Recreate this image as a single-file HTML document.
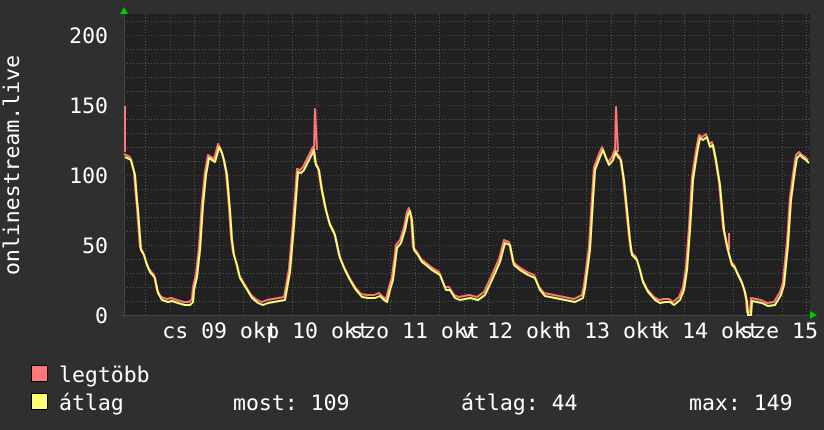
<!DOCTYPE html>
<html><head><meta charset="utf-8"><style>
html,body{margin:0;padding:0;background:#2f2f2f;}
svg{display:block}
text{font-family:"DejaVu Sans Mono","Liberation Mono",monospace;fill:#fff;font-size:21.5px}
</style></head><body>
<svg width="824" height="430" viewBox="0 0 824 430" xmlns="http://www.w3.org/2000/svg">
<rect width="824" height="430" fill="#2f2f2f"/>
<rect x="124" y="14" width="686" height="301" fill="#212121"/>
<g stroke="#555" stroke-width="1" stroke-dasharray="1,2">
<path d="M124 301.5H810M124 287.5H810M124 273.5H810M124 259.5H810M124 231.5H810M124 217.5H810M124 203.5H810M124 189.5H810M124 161.5H810M124 147.5H810M124 133.5H810M124 119.5H810M124 91.5H810M124 77.5H810M124 63.5H810M124 49.5H810M124 21.5H810"/>
<path d="M145.5 14V315M194.5 14V315M219.5 14V315M243.5 14V315M292.5 14V315M317.5 14V315M341.5 14V315M390.5 14V315M415.5 14V315M439.5 14V315M488.5 14V315M513.5 14V315M537.5 14V315M586.5 14V315M611.5 14V315M635.5 14V315M684.5 14V315M709.5 14V315M733.5 14V315M782.5 14V315M806.5 14V315"/>
</g>
<g stroke="#6a3a3a" stroke-width="1" stroke-dasharray="1,2">
<path d="M124 35.5H810M124 105.5H810M124 175.5H810M124 245.5H810"/>
<path d="M170.5 14V315M268.5 14V315M366.5 14V315M464.5 14V315M562.5 14V315M660.5 14V315M758.5 14V315"/>
</g>
<path d="M124.5 14V318" stroke="#444" stroke-width="1"/>
<path d="M121 315.5H812" stroke="#444" stroke-width="1"/>
<path d="M120 14L124 7L128 14Z" fill="#0c0"/>
<path d="M810 311L817 315L810 319Z" fill="#0c0"/>
<g fill="none" stroke-width="2" stroke-linejoin="round">
<polyline transform="translate(-1,-3)" stroke="#ff7777" points="125,157 131,160 135,175 137,200 138,210 141,250 144,255 147,265 150,272 155,278 158,293 162,300 168,302 172,301 178,303 185,305 190,305 193,302 194,290 197,277 200,250 203,205 206,175 209,158 212,160 215,162 217,155 219,147 222,153 224,160 227,175 230,210 232,240 234,255 237,265 240,278 246,288 252,298 258,303 263,305 268,303 285,300 290,272 294,225 298,172 301,173 304,170 308,162 314,150 316,165 319,170 322,190 326,210 330,225 335,235 340,258 345,270 350,280 356,290 362,297 368,298 375,298 380,296 384,300 387,302 390,290 393,280 397,248 401,243 405,230 408,215 410,211 412,220 414,250 418,255 422,262 426,265 432,270 440,275 446,290 450,290 455,298 460,300 470,298 478,300 485,295 492,280 500,262 505,243 510,245 514,265 520,270 528,275 535,278 540,290 545,296 555,298 565,300 575,302 583,298 585,288 590,250 593,200 595,170 600,157 603,150 606,158 609,165 613,160 616,152 618,157 621,160 624,180 627,210 630,240 632,255 637,260 640,270 643,282 648,292 655,300 660,303 665,302 670,302 674,305 680,300 684,290 687,270 690,230 693,180 696,160 698,148 700,138 703,140 707,137 710,147 713,145 716,160 720,185 724,230 728,250 732,265 735,268 738,275 742,283 745,292 747,302 748,315 751,315 752,301 757,302 762,303 768,306 775,305 778,300 781,295 784,285 788,245 791,200 795,170 797,158 800,155 803,158 806,160 809,163"/>
<path d="M125 152V106M314 150L315 109L317 150M615 152L616 107L618 152M729 250V233" stroke="#ff7777"/>
<polyline stroke="#ffff77" points="125,157 131,160 135,175 137,200 138,210 141,250 144,255 147,265 150,272 155,278 158,293 162,300 168,302 172,301 178,303 185,305 190,305 193,302 194,290 197,277 200,250 203,205 206,175 209,158 212,160 215,162 217,155 219,147 222,153 224,160 227,175 230,210 232,240 234,255 237,265 240,278 246,288 252,298 258,303 263,305 268,303 285,300 290,272 294,225 298,172 301,173 304,170 308,162 314,150 316,165 319,170 322,190 326,210 330,225 335,235 340,258 345,270 350,280 356,290 362,297 368,298 375,298 380,296 384,300 387,302 390,290 393,280 397,248 401,243 405,230 408,215 410,211 412,220 414,250 418,255 422,262 426,265 432,270 440,275 446,290 450,290 455,298 460,300 470,298 478,300 485,295 492,280 500,262 505,243 510,245 514,265 520,270 528,275 535,278 540,290 545,296 555,298 565,300 575,302 583,298 585,288 590,250 593,200 595,170 600,157 603,150 606,158 609,165 613,160 616,152 618,157 621,160 624,180 627,210 630,240 632,255 637,260 640,270 643,282 648,292 655,300 660,303 665,302 670,302 674,305 680,300 684,290 687,270 690,230 693,180 696,160 698,148 700,138 703,140 707,137 710,147 713,145 716,160 720,185 724,230 728,250 732,265 735,268 738,275 742,283 745,292 747,302 748,315 751,315 752,301 757,302 762,303 768,306 775,305 778,300 781,295 784,285 788,245 791,200 795,170 797,158 800,155 803,158 806,160 809,163"/>
</g>
<g text-anchor="end">
<text x="108" y="43">200</text>
<text x="108" y="113">150</text>
<text x="108" y="183">100</text>
<text x="108" y="253">50</text>
<text x="108" y="323">0</text>
</g>
<text transform="translate(19,165) rotate(-90)" text-anchor="middle">onlinestream.live</text>
<g text-anchor="middle">
<text x="220.5" y="338">cs 09 okt</text>
<text x="318" y="338">p 10 okt</text>
<text x="415" y="338">szo 11 okt</text>
<text x="513" y="338">v 12 okt</text>
<text x="610" y="338">h 13 okt</text>
<text x="708" y="338">k 14 okt</text>
<text x="805" y="338">sze 15 okt</text>
</g>
<rect x="31.5" y="365.5" width="16" height="16" fill="#ff7777" stroke="#000"/>
<rect x="31.5" y="393.5" width="16" height="16" fill="#ffff77" stroke="#000"/>
<text x="59" y="382">legtöbb</text>
<text x="59" y="410">átlag</text>
<text x="233" y="410">most: 109</text>
<text x="461" y="410">átlag: 44</text>
<text x="689" y="410">max: 149</text>
</svg>
</body></html>
